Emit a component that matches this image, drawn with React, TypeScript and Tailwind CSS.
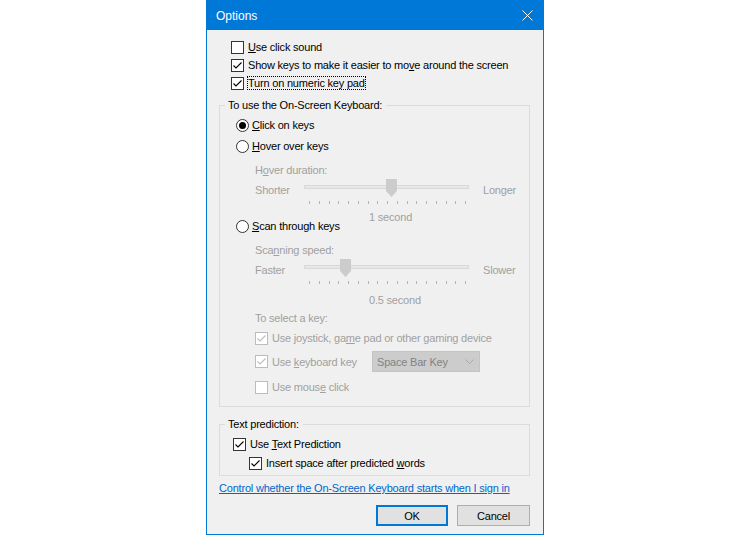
import React from "react";

type BoxProps = { checked?: boolean; disabled?: boolean };

function CheckBox({ checked, disabled }: BoxProps) {
  return (
    <span
      className={
        disabled
          ? "flex h-[13px] w-[13px] shrink-0 items-center justify-center border border-[#bcbcbc] bg-white"
          : "flex h-[13px] w-[13px] shrink-0 items-center justify-center border border-[#333333] bg-white"
      }
    >
      {checked && (
        <svg width="11" height="11" viewBox="0 0 11 11">
          <path d="M1.5 5.5L4 8L9.5 2.5" fill="none" stroke={disabled ? "#bcbcbc" : "#000000"} strokeWidth="1.1" />
        </svg>
      )}
    </span>
  );
}

function Radio({ selected }: { selected?: boolean }) {
  return (
    <span className="flex h-[13px] w-[13px] shrink-0 items-center justify-center rounded-full border border-[#333333] bg-white">
      {selected && <span className="h-[7px] w-[7px] rounded-full bg-black" />}
    </span>
  );
}

function Thumb({ className }: { className: string }) {
  return (
    <svg className={className} width="11" height="18" viewBox="0 0 11 18">
      <polygon points="0,0 11,0 11,12 5.5,18 0,12" fill="#cccccc" />
    </svg>
  );
}

function SliderRow({ left, right, thumb }: { left: string; right: string; thumb: string }) {
  return (
    <div className="mt-[2px] flex h-[20px] items-center pl-[35px] text-[#a0a0a0]">
      <span className="w-[49px]">{left}</span>
      <div className="relative h-[20px] w-[165px]">
        <div className="mt-[5px] h-[4px] w-full border border-[#d9d9d9] bg-[#e7e7e7]" />
        <Thumb className={thumb} />
      </div>
      <span className="ml-[14px]">{right}</span>
    </div>
  );
}

function Ticks() {
  return (
    <div className="mt-[1px] flex h-[3px] w-[157px] justify-between ml-[89px]">
      {Array.from({ length: 17 }).map((_, i) => (
        <span key={i} className="h-[3px] w-px bg-[#b4b4b4]" />
      ))}
    </div>
  );
}

export default function App() {
  return (
    <div className="min-h-[536px] bg-white font-['Liberation_Sans',Arial,sans-serif] text-[11px] leading-[14px] tracking-[-0.2px] text-black">
      <div className="mx-auto flex h-[535px] w-[338px] flex-col border border-[#0078d7] bg-[#f0f0f0]">
        {/* title bar */}
        <div className="flex h-[29px] shrink-0 items-center justify-between bg-[#0078d7] pl-[9px] pr-[10px]">
          <span className="text-[12px] tracking-normal text-white">Options</span>
          <svg width="11" height="11" viewBox="0 0 11 11">
            <path d="M0.5 0.5L10.5 10.5M10.5 0.5L0.5 10.5" stroke="#ffffff" strokeWidth="1" />
          </svg>
        </div>

        <div className="mt-[8px] flex flex-col pl-[24px]">
          <label className="flex h-[18px] items-center gap-[4px]">
            <CheckBox />
            <span>
              <u>U</u>se click sound
            </span>
          </label>
          <label className="flex h-[18px] items-center gap-[4px]">
            <CheckBox checked />
            <span>
              Show keys to make it easier to mo<u>v</u>e around the screen
            </span>
          </label>
          <label className="flex h-[18px] items-center gap-[3px]">
            <CheckBox checked />
            <span className="border border-dotted border-black leading-[12px]">Turn on numeric key pad</span>
          </label>
        </div>

        <fieldset className="ml-[12px] mr-[13px] mt-[6px] flex flex-col border border-[#dcdcdc] pb-[11px]">
          <legend className="ml-[5px] pl-[3px] pr-[4px] leading-[14px]">To use the On-Screen Keyboard:</legend>

          <label className="mt-[5px] flex h-[16px] items-center gap-[3px] pl-[16px]">
            <Radio selected />
            <span>
              <u>C</u>lick on keys
            </span>
          </label>
          <label className="mt-[5px] flex h-[16px] items-center gap-[3px] pl-[16px]">
            <Radio />
            <span>
              <u>H</u>over over keys
            </span>
          </label>
          <div className="mt-[8px] flex h-[16px] items-center pl-[35px] text-[#a0a0a0]">
            <span>
              H<u>o</u>ver duration:
            </span>
          </div>
          <SliderRow left="Shorter" right="Longer" thumb="absolute left-[82px] top-[-1px]" />
          <Ticks />
          <div className="mt-[5px] flex h-[16px] items-center pl-[149px] text-[#a0a0a0]">1 second</div>

          <label className="-mt-[7px] flex h-[16px] items-center gap-[3px] pl-[16px]">
            <Radio />
            <span>
              <u>S</u>can through keys
            </span>
          </label>
          <div className="mt-[8px] flex h-[16px] items-center pl-[35px] text-[#a0a0a0]">
            <span>
              Sca<u>n</u>ning speed:
            </span>
          </div>
          <SliderRow left="Faster" right="Slower" thumb="absolute left-[36px] top-[-1px]" />
          <Ticks />
          <div className="mt-[8px] flex h-[16px] items-center pl-[149px] text-[#a0a0a0]">0.5 second</div>
          <div className="mt-[2px] flex h-[16px] items-center pl-[35px] text-[#a0a0a0]">To select a key:</div>

          <label className="mt-[4px] flex h-[16px] items-center gap-[4px] pl-[35px] text-[#a0a0a0]">
            <CheckBox checked disabled />
            <span>
              Use joystick, ga<u>m</u>e pad or other gaming device
            </span>
          </label>
          <div className="mt-[5px] flex h-[21px] items-center pl-[35px] text-[#a0a0a0]">
            <label className="flex w-[117px] items-center gap-[4px]">
              <CheckBox checked disabled />
              <span>
                Use <u>k</u>eyboard key
              </span>
            </label>
            <div className="flex h-[21px] w-[108px] items-center justify-between border border-[#c4c4c4] bg-[#cccccc] pl-[4px] pr-[5px] text-[#838383]">
              <span>Space Bar Key</span>
              <svg width="9" height="5" viewBox="0 0 9 5">
                <path d="M0.5 0.5L4.5 4.5L8.5 0.5" fill="none" stroke="#a8a8a8" strokeWidth="1" />
              </svg>
            </div>
          </div>
          <label className="mt-[7px] flex h-[16px] items-center gap-[4px] pl-[35px] text-[#a0a0a0]">
            <CheckBox disabled />
            <span>
              Use mous<u>e</u> click
            </span>
          </label>
        </fieldset>

        <fieldset className="ml-[12px] mr-[13px] mt-[10px] flex flex-col border border-[#dcdcdc] pb-[4px]">
          <legend className="ml-[5px] pl-[3px] pr-[4px] leading-[14px]">Text prediction:</legend>
          <label className="mt-[5px] flex h-[16px] items-center gap-[4px] pl-[13px]">
            <CheckBox checked />
            <span>
              Use <u>T</u>ext Prediction
            </span>
          </label>
          <label className="mt-[3px] flex h-[16px] items-center gap-[4px] pl-[29px]">
            <CheckBox checked />
            <span>
              Insert space after predicted <u>w</u>ords
            </span>
          </label>
        </fieldset>

        <div className="ml-[12px] mt-[4px] flex h-[16px] items-center">
          <a className="text-[#0066cc] underline">Control whether the On-Screen Keyboard starts when I sign in</a>
        </div>

        <div className="mt-[9px] flex justify-end gap-[9px] pr-[13px]">
          <button className="h-[21px] w-[72px] border-2 border-[#0078d7] bg-[#e1e1e1] text-center">OK</button>
          <button className="h-[21px] w-[73px] border border-[#adadad] bg-[#e1e1e1] text-center">Cancel</button>
        </div>
      </div>
    </div>
  );
}
